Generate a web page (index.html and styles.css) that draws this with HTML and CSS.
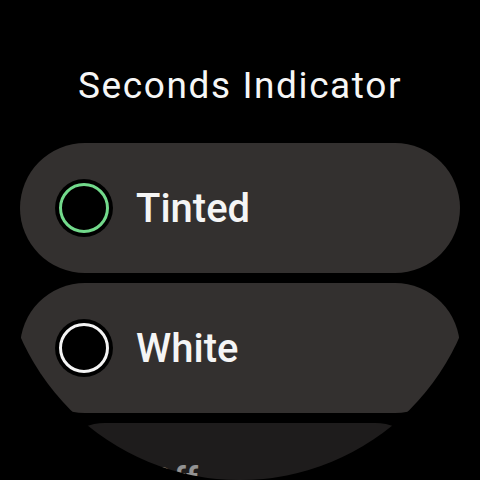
FILE: index.html
```html
<!DOCTYPE html>
<html>
<head>
<meta charset="utf-8">
<link rel="stylesheet" href="styles.css">
</head>
<body>
<div class="watch">
  <div class="title">Seconds Indicator</div>
  <div class="list">
    <div class="chip">
      <span class="radio"><span class="ring ring-tinted"></span></span>
      <span class="label">Tinted</span>
    </div>
    <div class="chip">
      <span class="radio"><span class="ring ring-white"></span></span>
      <span class="label">White</span>
    </div>
    <div class="chip chip-far">
      <span class="radio"><span class="ring ring-white"></span></span>
      <span class="label">Off</span>
    </div>
  </div>
</div>
</body>
</html>
```

FILE: styles.css
```css
html, body {
  margin: 0;
  padding: 0;
  background: #000;
}

body {
  width: 480px;
  height: 480px;
  overflow: hidden;
  font-family: Roboto, "Noto Sans", sans-serif;
}

.watch {
  width: 480px;
  height: 480px;
  border-radius: 50%;
  overflow: hidden;
  background: #000;
  display: flex;
  flex-direction: column;
  align-items: center;
}

.title {
  padding-top: 64px;
  font-size: 37px;
  line-height: 44px;
  font-weight: 400;
  color: #f6f6f6;
  letter-spacing: 1.6px;
}

.list {
  margin-top: 35px;
  display: flex;
  flex-direction: column;
  gap: 10px;
  width: 440px;
}

.chip {
  flex: 0 0 auto;
  height: 130px;
  border-radius: 65px;
  background: #33302f;
  display: flex;
  align-items: center;
  padding-left: 35px;
  gap: 23px;
  box-sizing: border-box;
}

.chip-far {
  transform: scale(0.87);
  transform-origin: center top;
  opacity: 0.6;
}

.radio {
  width: 58px;
  height: 58px;
  border-radius: 50%;
  background: #000;
  display: flex;
  align-items: center;
  justify-content: center;
  flex: 0 0 auto;
}

.ring {
  width: 50px;
  height: 50px;
  border-radius: 50%;
  box-sizing: border-box;
  border: 3px solid #fff;
  background: #000;
}

.ring-tinted {
  border-color: #72d98b;
}

.ring-white {
  border-color: #f4f4f4;
}

.label {
  font-size: 40px;
  font-weight: 500;
  color: #f5f5f5;
}
```
